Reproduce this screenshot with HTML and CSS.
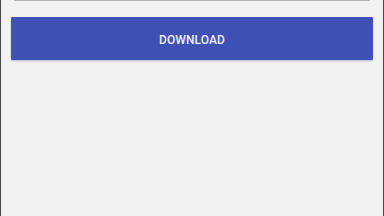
FILE: index.html
```html
<!DOCTYPE html>
<html lang="en">
<head>
<meta charset="UTF-8">
<meta name="viewport" content="width=device-width, initial-scale=1.0">
<title>Download</title>
<link rel="stylesheet" href="styles.css">
</head>
<body>
    <div class="screen">
        <div class="field"></div>
        <button class="download-btn">DOWNLOAD</button>
    </div>
</body>
</html>
```

FILE: styles.css
```css
html, body {
    margin: 0;
    padding: 0;
    height: 100%;
}
body {
    font-family: Roboto, "Noto Sans", Arial, sans-serif;
    background-color: #f2f2f2;
}
.screen {
    height: 216px;
    box-sizing: border-box;
    border-left: 1px solid #4a4a4a;
    border-right: 1px solid #4a4a4a;
    padding: 0 10px 0 10px;
    display: flex;
    flex-direction: column;
}
.field {
    height: 0;
    margin: 0 3px 0 3px;
    border-bottom: 1px solid #b4b4b4;
}
.download-btn {
    margin-top: 16px;
    height: 43px;
    width: 100%;
    background-color: #3f51b5;
    color: #eef0fb;
    border: none;
    border-radius: 1px;
    font-family: Roboto, sans-serif;
    font-weight: 500;
    font-size: 12px;
    letter-spacing: 0.1px;
    box-shadow: 0 1px 2px rgba(63, 81, 181, 0.35);
    padding: 2px 0 0 0;
}
```
